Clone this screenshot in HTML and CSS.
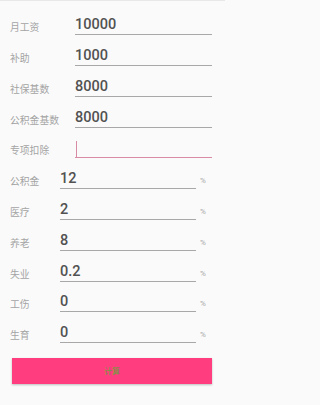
FILE: index.html
```html
<!DOCTYPE html>
<html lang="zh">
<head>
<meta charset="utf-8">
<link rel="stylesheet" href="styles.css">
</head>
<body>
<div class="page">
  <div class="row wide"><span class="label">月工资</span><span class="field">10000</span></div>
  <div class="row wide"><span class="label">补助</span><span class="field">1000</span></div>
  <div class="row wide"><span class="label">社保基数</span><span class="field">8000</span></div>
  <div class="row wide"><span class="label">公积金基数</span><span class="field">8000</span></div>
  <div class="row wide"><span class="label">专项扣除</span><span class="field focus"><span class="cursor"></span></span></div>
  <div class="row pct"><span class="label">公积金</span><span class="field">12</span><span class="unit">%</span></div>
  <div class="row pct"><span class="label">医疗</span><span class="field">2</span><span class="unit">%</span></div>
  <div class="row pct"><span class="label">养老</span><span class="field">8</span><span class="unit">%</span></div>
  <div class="row pct"><span class="label">失业</span><span class="field">0.2</span><span class="unit">%</span></div>
  <div class="row pct"><span class="label">工伤</span><span class="field">0</span><span class="unit">%</span></div>
  <div class="row pct"><span class="label">生育</span><span class="field">0</span><span class="unit">%</span></div>
  <div class="btn">计算</div>
</div>
</body>
</html>
```
FILE: styles.css
```css
html, body {
  margin: 0;
  padding: 0;
  background: #fafafa;
}
.page {
  width: 225px;
  height: 405px;
  box-sizing: border-box;
  border-top: 1px solid #e8e8e8;
  padding-top: 3.5px;
  font-family: "Noto Sans CJK SC", Roboto, sans-serif;
}
.row {
  display: flex;
  align-items: flex-end;
  height: 30.8px;
  padding-left: 10px;
}
.label {
  color: #a4a4a4;
  font-size: 9.8px;
  line-height: 14px;
  padding-bottom: 1px;
}
.wide .label { width: 65px; }
.pct .label { width: 50px; }
.field {
  display: flex;
  align-items: flex-end;
  height: 18px;
  box-sizing: border-box;
  padding-bottom: 2px;
  border-bottom: 1.5px solid #a8a8a8;
  font-family: Roboto, "Noto Sans CJK SC", sans-serif;
  font-weight: 500;
  font-size: 14.5px;
  line-height: 14px;
  color: #525252;
}
.wide .field { width: 137px; }
.pct .field { width: 136px; }
.field.focus {
  border-bottom-color: #d98aa6;
  padding-bottom: 0;
}
.cursor {
  width: 1.5px;
  height: 16.5px;
  margin-left: 0.5px;
  background: #d98aa6;
}
.unit {
  font-family: Roboto, sans-serif;
  font-size: 8px;
  color: #a8a8a8;
  margin-left: 4px;
  padding-bottom: 4px;
}
.btn {
  margin: 14.7px 13px 0 12px;
  height: 26px;
  background: #ff3d7f;
  box-shadow: 0 1px 2px rgba(0,0,0,0.25);
  color: #6f9e3c;
  font-size: 8px;
  display: flex;
  align-items: center;
  justify-content: center;
  font-family: "Noto Sans CJK SC", sans-serif;
}
```
